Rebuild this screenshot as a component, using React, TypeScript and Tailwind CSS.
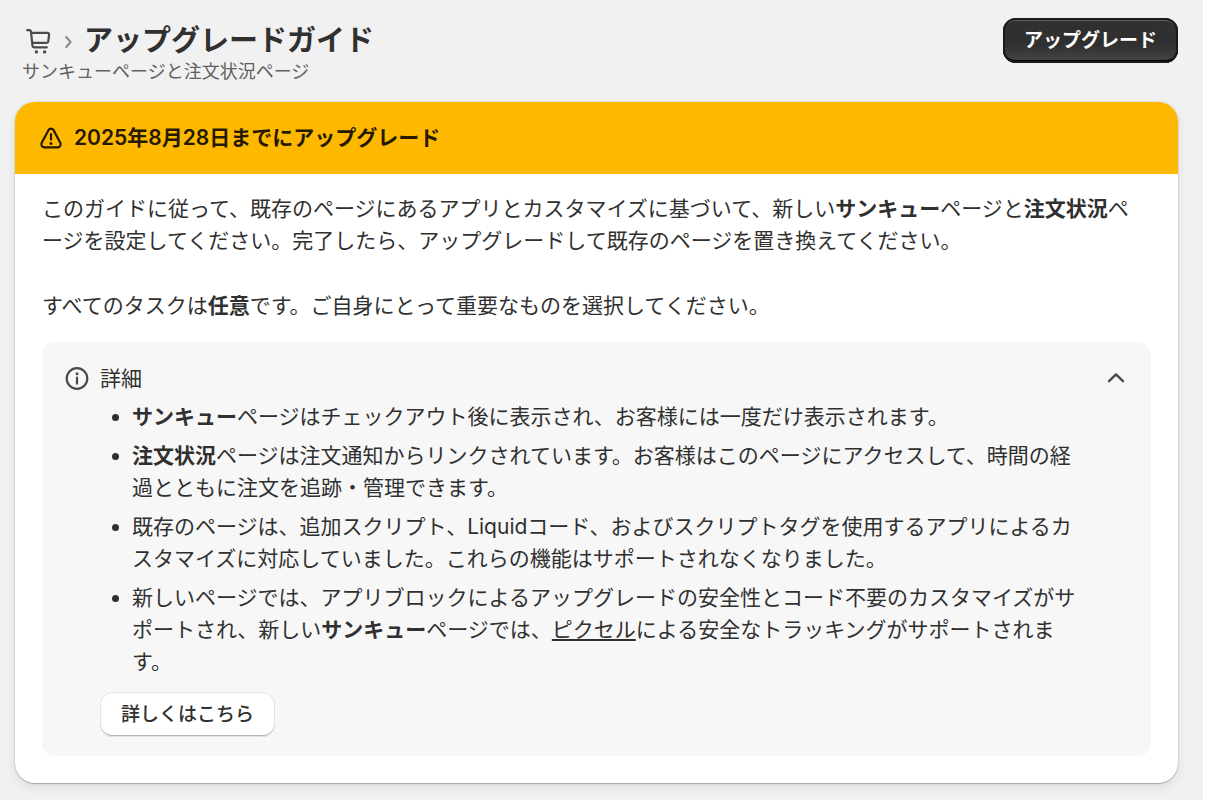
import type { ReactNode } from "react";

interface DetailItemProps {
  children: ReactNode;
}

function DetailItem({ children }: DetailItemProps) {
  return <li>{children}</li>;
}

function CartIcon() {
  return (
    <svg viewBox="0 0 26 26" className="size-6.5 text-[#4a4a4a]" fill="none" aria-hidden="true">
      <path
        d="M1.2 2.2h2c1 0 1.7.6 1.8 1.6l1.5 14c.1.9.7 1.5 1.7 1.5h12.6M5.2 4.9h16.6c.8 0 1.4.7 1.3 1.5l-.8 7c-.1.9-.8 1.5-1.6 1.5H6.4"
        stroke="currentColor"
        strokeWidth="2.2"
        strokeLinecap="round"
        strokeLinejoin="round"
      />
      <circle cx="10.4" cy="23.9" r="1.7" fill="currentColor" />
      <circle cx="18.6" cy="23.9" r="1.7" fill="currentColor" />
    </svg>
  );
}

function AlertIcon() {
  return (
    <svg viewBox="0 0 24 24" className="size-6 shrink-0" fill="none" aria-hidden="true">
      <path
        d="M9.6 3.9c1-1.8 3.8-1.8 4.8 0l6.9 12.9c1 2-.2 4.5-2.4 4.5H5.1c-2.2 0-3.4-2.5-2.4-4.5z"
        stroke="currentColor"
        strokeWidth="2.2"
        strokeLinejoin="round"
      />
      <path d="M12 8v5.6" stroke="currentColor" strokeWidth="2.2" strokeLinecap="round" />
      <circle cx="12" cy="17.4" r="1.5" fill="currentColor" />
    </svg>
  );
}

function InfoIcon() {
  return (
    <svg viewBox="0 0 26 26" className="size-6.5 shrink-0 text-[#4a4a4a]" fill="none" aria-hidden="true">
      <circle cx="13" cy="12.5" r="10.3" stroke="currentColor" strokeWidth="2.2" />
      <path d="M13 11.7v6" stroke="currentColor" strokeWidth="2.2" strokeLinecap="round" />
      <circle cx="13" cy="7.8" r="1.5" fill="currentColor" />
    </svg>
  );
}

export default function App() {
  return (
    <div className="min-h-screen bg-white pr-[5px] font-[Inter,'Noto_Sans_CJK_JP',sans-serif] text-[#303030]">
      <div className="min-h-screen bg-[#f1f1f1] pt-[18px] pr-[25px] pb-4 pl-[15px]">
        <header className="flex items-start justify-between">
          <div className="pl-[7px]">
            <div className="flex h-[46px] items-center">
              <a href="#checkout" aria-label="チェックアウト" className="ml-1">
                <CartIcon />
              </a>
              <svg viewBox="0 0 8 14" className="mx-3 mt-0.5 h-3.5 w-2 text-[#8a8a8a]" fill="none" aria-hidden="true">
                <path
                  d="M2.2 2l4.4 5-4.4 5"
                  stroke="currentColor"
                  strokeWidth="2"
                  strokeLinecap="round"
                  strokeLinejoin="round"
                />
              </svg>
              <h1 className="text-[29px] leading-[44px] font-bold">アップグレードガイド</h1>
            </div>
            <p className="text-lg leading-4 text-[#616161]">サンキューページと注文状況ページ</p>
          </div>
          <button className="h-[45px] rounded-[13px] bg-linear-to-b from-[#303030] from-60% to-[#484848] px-[21px] pt-0.5 text-[19px] font-bold text-white shadow-[inset_0_0_0_2px_#1a1a1a,inset_0_-3px_0_0_#000,inset_0_3px_0_0_#5c5c5c]">
            アップグレード
          </button>
        </header>

        <section className="mt-[22px] overflow-hidden rounded-[20px] bg-white shadow-[0_0_2px_rgba(0,0,0,0.2),0_1px_1px_rgba(0,0,0,0.2),0_5px_12px_rgba(0,0,0,0.08)]">
          <div className="flex h-18 items-center gap-[11px] bg-[#ffb800] px-6 text-[#251a00]">
            <AlertIcon />
            <h2 className="text-[21px] leading-8 font-semibold">2025年8月28日までにアップグレード</h2>
          </div>

          <div className="px-[27px] pt-[19px] pb-[27px] text-[21px] leading-8">
            <p className="pr-4">
              このガイドに従って、既存のページにあるアプリとカスタマイズに基づいて、新しい<b>サンキュー</b>ページと
              <b>注文状況</b>ページを設定してください。完了したら、アップグレードして既存のページを置き換えてください。
            </p>
            <p className="mt-[33px] pr-4">
              すべてのタスクは<b>任意</b>です。ご自身にとって重要なものを選択してください。
            </p>

            <div className="mt-5 rounded-[13px] bg-[#f7f7f7] pt-[21px] pr-[23px] pb-[19px] pl-[22px]">
              <button className="flex w-full items-center text-left" aria-expanded="true">
                <InfoIcon />
                <span className="ml-2.5">詳細</span>
                <svg viewBox="0 0 24 24" className="ml-auto size-6 text-[#4a4a4a]" fill="none" aria-hidden="true">
                  <path
                    d="M5 14.2l7-6.8 7 6.8"
                    stroke="currentColor"
                    strokeWidth="2.4"
                    strokeLinecap="round"
                    strokeLinejoin="round"
                  />
                </svg>
              </button>
              <div className="pr-11 pl-9">
                <ul className="mt-1.5 flex list-disc flex-col gap-[7px] pl-8">
                  <DetailItem>
                    <b>サンキュー</b>ページはチェックアウト後に表示され、お客様には一度だけ表示されます。
                  </DetailItem>
                  <DetailItem>
                    <b>注文状況</b>
                    ページは注文通知からリンクされています。お客様はこのページにアクセスして、時間の経過とともに注文を追跡・管理できます。
                  </DetailItem>
                  <DetailItem>
                    既存のページは、追加スクリプト、Liquidコード、およびスクリプトタグを使用するアプリによるカスタマイズに対応していました。これらの機能はサポートされなくなりました。
                  </DetailItem>
                  <DetailItem>
                    新しいページでは、アプリブロックによるアップグレードの安全性とコード不要のカスタマイズがサポートされ、新しい
                    <b>サンキュー</b>ページでは、
                    <a href="#pixels" className="underline">
                      ピクセル
                    </a>
                    による安全なトラッキングがサポートされます。
                  </DetailItem>
                </ul>
                <button className="mt-3.5 h-[45px] rounded-[13px] bg-white px-[21px] text-[19px] font-medium shadow-[inset_0_0_0_1px_#e3e3e3,inset_0_-2px_0_0_#b5b5b5]">
                  詳しくはこちら
                </button>
              </div>
            </div>
          </div>
        </section>
      </div>
    </div>
  );
}
